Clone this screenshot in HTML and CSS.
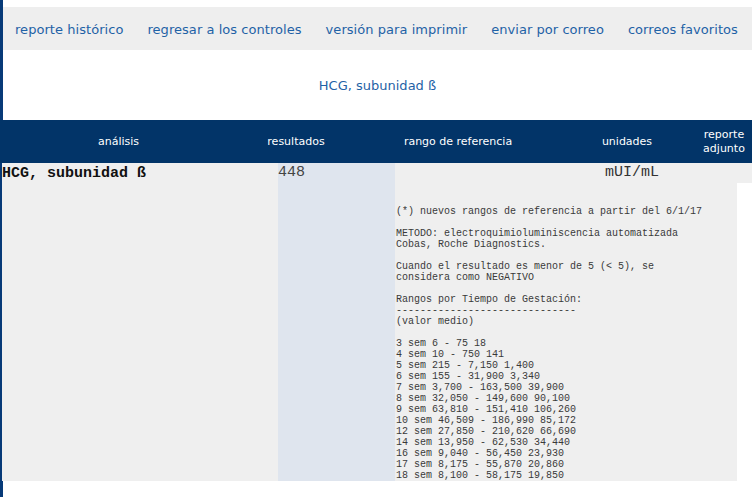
FILE: index.html
```html
<!DOCTYPE html>
<html lang="es">
<head>
<meta charset="utf-8">
<title>HCG, subunidad ß</title>
<link rel="stylesheet" href="styles.css">
</head>
<body>
<div class="page">
  <nav class="nav">
    <a href="#">reporte histórico</a>
    <a href="#">regresar a los controles</a>
    <a href="#">versión para imprimir</a>
    <a href="#">enviar por correo</a>
    <a href="#">correos favoritos</a>
  </nav>
  <div class="title">HCG, subunidad ß</div>
  <div class="thead">
    <div class="th">análisis</div>
    <div class="th">resultados</div>
    <div class="th">rango de referencia</div>
    <div class="th">unidades</div>
    <div class="th th-last">reporte<br>adjunto</div>
  </div>
  <div class="row">
    <div class="cell c-name">HCG, subunidad ß</div>
    <div class="cell c-result">448</div>
    <div class="cell c-range">
      <div class="units">mUI/mL</div>
<pre class="ref">(*) nuevos rangos de referencia a partir del 6/1/17

METODO: electroquimioluminiscencia automatizada
Cobas, Roche Diagnostics.

Cuando el resultado es menor de 5 (&lt; 5), se
considera como NEGATIVO

Rangos por Tiempo de Gestación:
------------------------------
(valor medio)

3 sem 6 - 75 18
4 sem 10 - 750 141
5 sem 215 - 7,150 1,400
6 sem 155 - 31,900 3,340
7 sem 3,700 - 163,500 39,900
8 sem 32,050 - 149,600 90,100
9 sem 63,810 - 151,410 106,260
10 sem 46,509 - 186,990 85,172
12 sem 27,850 - 210,620 66,690
14 sem 13,950 - 62,530 34,440
16 sem 9,040 - 56,450 23,930
17 sem 8,175 - 55,870 20,860
18 sem 8,100 - 58,175 19,850</pre>
    </div>
    <div class="cell c-attach"><div class="attach-top"></div></div>
  </div>
</div>
</body>
</html>
```

FILE: styles.css
```css
html, body {
  margin: 0;
  padding: 0;
  background: #ffffff;
}

.page {
  min-height: 497px;
  border-left: 3px solid #073a78;
  box-sizing: border-box;
  font-family: "DejaVu Sans", Verdana, sans-serif;
  padding-top: 7px;
}

.nav {
  display: flex;
  align-items: center;
  height: 43px;
  box-sizing: border-box;
  padding-top: 2px;
  background: #eeeeee;
}

.nav a {
  color: #1f62a6;
  text-decoration: none;
  font-size: 13px;
  letter-spacing: 0.05px;
  padding: 0 12px;
  white-space: nowrap;
}

.title {
  height: 70px;
  display: flex;
  align-items: center;
  justify-content: center;
  color: #1f62a6;
  font-size: 13px;
  padding-top: 1px;
  box-sizing: border-box;
}

.thead {
  display: grid;
  grid-template-columns: 231px 124px 200px 138px 56px;
  align-items: center;
  height: 43px;
  background: #023468;
  margin-left: -3px;
  padding-left: 3px;
  color: #ffffff;
  font-size: 11px;
}

.th {
  text-align: center;
  line-height: 14px;
}

.th-last {
  padding-top: 1px;
}

.row {
  display: grid;
  grid-template-columns: 275px 117px 342px 15px;
  height: 317px;
}

.cell {
  font-family: "Liberation Mono", "Courier New", monospace;
}

.c-name {
  background: #efefef;
  font-weight: bold;
  font-size: 15px;
  line-height: 17px;
  color: #111111;
  padding-top: 2px;
  margin-left: -1px;
}

.c-result {
  background: #dfe5ee;
  font-size: 15px;
  line-height: 17px;
  color: #444444;
  padding-top: 1px;
}

.c-range {
  background: #efefef;
}

.units {
  margin-left: 210px;
  font-size: 15px;
  line-height: 17px;
  color: #333333;
  padding-top: 1px;
}

.ref {
  margin: 25px 0 0 1px;
  font-family: "Liberation Mono", "Courier New", monospace;
  font-size: 10px;
  line-height: 11px;
  color: #3a3a3a;
}

.c-attach {
  background: #ffffff;
}

.attach-top {
  height: 20px;
  background: #efefef;
}
```
